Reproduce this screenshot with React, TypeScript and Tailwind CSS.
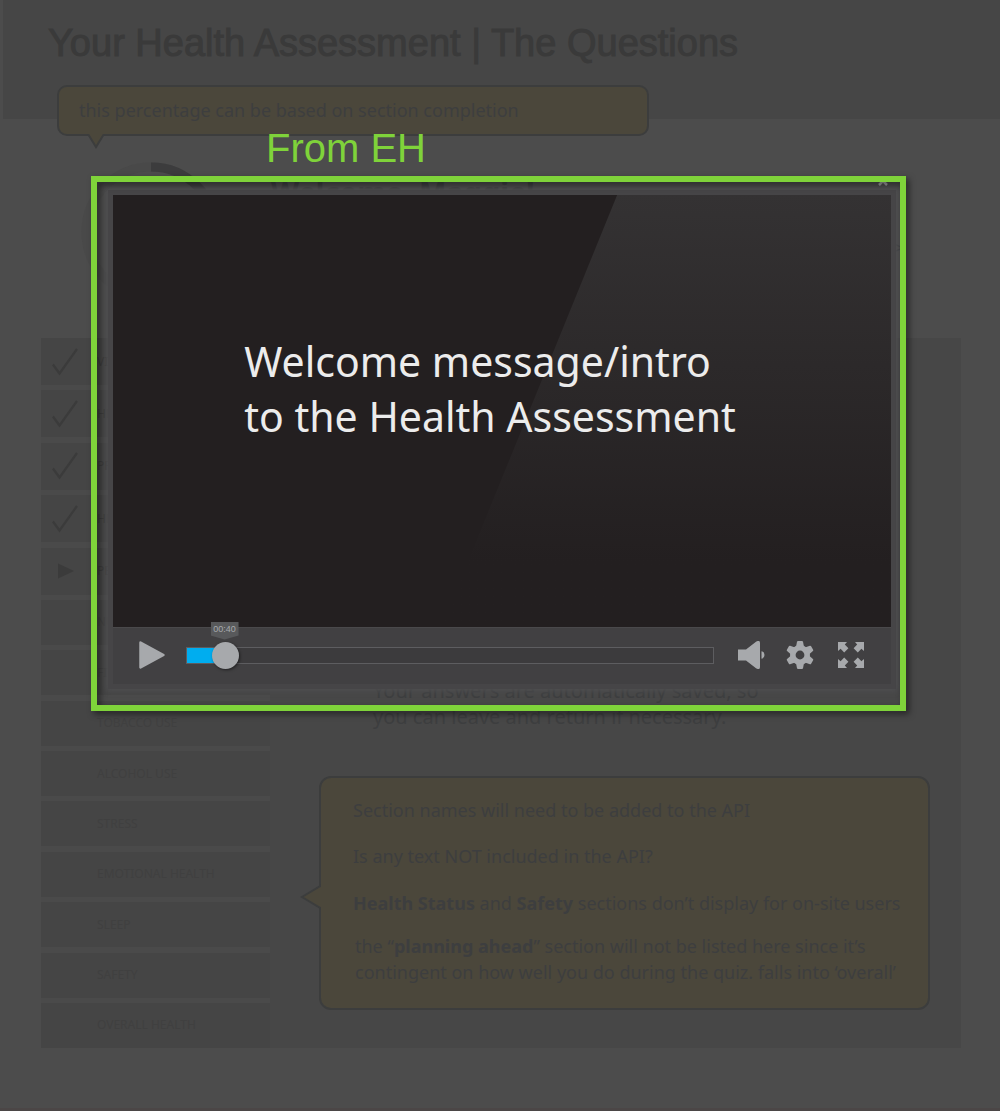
import { useState } from 'react';

type Section = { name: string; state: 'done' | 'current' | 'open' };

const sections: Section[] = [
  { name: 'VITALS', state: 'done' },
  { name: 'HEALTH HISTORY', state: 'done' },
  { name: 'PREVENTION', state: 'done' },
  { name: 'HEALTH STATUS', state: 'done' },
  { name: 'PERSONAL', state: 'current' },
  { name: 'NUTRITION', state: 'open' },
  { name: 'FITNESS', state: 'open' },
  { name: 'TOBACCO USE', state: 'open' },
  { name: 'ALCOHOL USE', state: 'open' },
  { name: 'STRESS', state: 'open' },
  { name: 'EMOTIONAL HEALTH', state: 'open' },
  { name: 'SLEEP', state: 'open' },
  { name: 'SAFETY', state: 'open' },
  { name: 'OVERALL HEALTH', state: 'open' },
];

function StateIcon({ state }: { state: Section['state'] }) {
  if (state === 'done') {
    return (
      <svg viewBox="0 0 28 30" className="h-[30px] w-7 fill-none stroke-[#3b3b3b]" aria-hidden="true">
        <path d="M2 17.500 8.500 26.500 26 2" strokeWidth="2.200" />
      </svg>
    );
  }
  if (state === 'current') {
    return (
      <svg viewBox="0 0 28 30" className="h-[30px] w-7 fill-[#3b3b3b]" aria-hidden="true">
        <path d="M7 7.500 23 15 7 22.500Z" />
      </svg>
    );
  }
  return <span className="w-7" />;
}

function ProgressRing() {
  return (
    <svg viewBox="0 0 140 140" className="size-[140px] shrink-0 fill-none" role="img" aria-label="Progress">
      <circle cx="70" cy="70" r="65" stroke="#494949" strokeWidth="9" />
      <path d="M70 5A65 65 0 0 1 135 70" stroke="#3c3c3d" strokeWidth="9" />
    </svg>
  );
}

function Player() {
  const duration = 786;
  const [time, setTime] = useState(40);
  const share = time / duration;
  const at = `calc(${share * 100}% + ${13 - share * 26}px)`;
  const clock = `${String(Math.floor(time / 60)).padStart(2, '0')}:${String(time % 60).padStart(2, '0')}`;

  return (
    <div className="border-[5px] border-[#464547] bg-[#414042] shadow-[0_0_5px_2px_#4e4e50]">
      <div className="relative flex aspect-[778/432] items-center justify-center bg-[#231f20]">
        <div className="absolute inset-0 bg-linear-to-b from-[#343233] to-[#231f20] to-85% [clip-path:polygon(64.8%_0,100%_0,100%_100%,42.200%_100%)]" />
        <p className="relative -mt-11 pr-6 text-[41px] leading-[55px] text-[#ececec]">
          Welcome message/intro
          <br />
          to the Health Assessment
        </p>
      </div>
      <div className="flex h-[57px] items-center border-t border-[#4a494b] pr-[27px] pb-0.5 pl-[25px] text-[#a7a9ac]">
        <button type="button" aria-label="Play" className="mr-5 shrink-0">
          <svg viewBox="0 0 28 30" className="h-[30px] w-7 fill-current stroke-current">
            <path d="M2.500 2.500 25.500 15 2.500 27.500Z" strokeWidth="2.500" strokeLinejoin="round" />
          </svg>
        </button>
        <div className="relative flex grow items-center">
          <input
            type="range"
            aria-label="Playback position"
            min={0}
            max={duration}
            value={time}
            onChange={(e) => setTime(Number(e.target.value))}
            style={{ backgroundImage: `linear-gradient(to right, #00adef ${at}, transparent ${at})` }}
            className="h-[17px] w-full appearance-none border border-[#5d5d60] bg-[#3c3b3d] [&::-webkit-slider-thumb]:size-[27px] [&::-webkit-slider-thumb]:appearance-none [&::-webkit-slider-thumb]:rounded-full [&::-webkit-slider-thumb]:bg-[#a7a9ac] [&::-webkit-slider-thumb]:shadow-[1px_1px_3px_rgba(0,0,0,0.5)]"
          />
          <output
            style={{ left: at }}
            className="absolute bottom-6 h-[18px] w-7 -translate-x-1/2 bg-[#58595b] text-center font-['Liberation_Sans',sans-serif] text-[9px] leading-[15px] [clip-path:polygon(0_0,100%_0,100%_78%,50%_100%,0_78%)]"
          >
            {clock}
          </output>
        </div>
        <button type="button" aria-label="Volume" className="ml-6 shrink-0">
          <svg viewBox="0 0 28 28" className="size-7 fill-current">
            <path d="M0 8.500H8L18 .8Q22 -1.500 22 2V26Q22 29.500 18 27.200L8 19.500H0Z" />
            <path d="M23.500 10.200A3.900 3.900 0 0 1 23.500 17.800Z" />
          </svg>
        </button>
        <button type="button" aria-label="Settings" className="ml-5 shrink-0">
          <svg viewBox="0 0 28 28" className="size-7">
            <circle cx="14" cy="14" r="7.200" fill="none" stroke="currentColor" strokeWidth="5.600" />
            <g fill="currentColor">
              {[0, 60, 120, 180, 240, 300].map((deg) => (
                <path key={deg} d="M10 6 11 .8Q11.200 0 12 0H16Q16.800 0 17 .8L18 6Z" transform={`rotate(${deg} 14 14)`} />
              ))}
            </g>
          </svg>
        </button>
        <button type="button" aria-label="Full screen" className="ml-6 shrink-0">
          <svg viewBox="0 0 26 26" className="size-[26px] fill-current">
            {[0, 90, 180, 270].map((deg) => (
              <path key={deg} d="M0 0H9L6.800 2.600 10.400 6.200 6.200 10.400 2.600 6.800 0 9Z" transform={`rotate(${deg} 13 13)`} />
            ))}
          </svg>
        </button>
      </div>
    </div>
  );
}

export default function App() {
  return (
    <div className="relative min-h-screen overflow-hidden border-b-[3px] border-[#4b4646] bg-[#4c4c4c] font-['Noto_Sans',sans-serif] text-[#3d3e3f]">
      <header className="ml-[3px] h-[119px] bg-[#464646] px-[45px] pt-[21px]">
        <h1 className="font-['Liberation_Sans',sans-serif] text-[38px] leading-[44px] text-[#3a3a3a] [-webkit-text-stroke:1px_#3a3a3a]">
          Your Health Assessment | The Questions
        </h1>
      </header>

      <aside className="absolute top-[85px] left-[57px] w-[592px] rounded-[10px] border-2 border-[#3c3d3d] bg-[#4b473b] px-5 pt-[9px] pb-2.5 text-[18px] leading-7">
        this percentage can be based on section completion
        <svg viewBox="0 0 18 16" className="absolute top-full left-7 h-4 w-[18px]" aria-hidden="true">
          <path d="M1 0 9 13 17 0" fill="#4b473b" stroke="#3c3d3d" strokeWidth="2" />
        </svg>
      </aside>

      <section className="flex h-[219px] items-start gap-[50px] pt-[43px] pr-[96px] pl-[81px]">
        <ProgressRing />
        <h2 className="grow pt-3 text-[29px] leading-9 font-bold">Welcome, Maggie!</h2>
        <span className="pt-[74px] text-xl leading-6" aria-hidden="true">&gt;</span>
      </section>

      <main className="mr-[39px] mb-[60px] ml-[41px] flex min-h-[710px] bg-[#474747]">
        <nav aria-label="Sections" className="flex w-[229px] shrink-0 bg-[#4a4a4a]">
          <ul className="flex grow flex-col justify-between">
            {sections.map((s) => (
              <li key={s.name}>
                {s.state === 'open' ? (
                  <a href="#section" className="flex h-[45px] items-center gap-[18px] bg-[#454545] pl-2.5 text-[12px] text-[#404040]">
                    <StateIcon state={s.state} />
                    {s.name}
                  </a>
                ) : (
                  <a href="#section" className="flex h-[47px] items-center gap-[18px] bg-[#454545] pl-2.5 text-[12px] text-[#3b3b3b]">
                    <StateIcon state={s.state} />
                    {s.name}
                  </a>
                )}
              </li>
            ))}
          </ul>
        </nav>

        <div className="flex grow flex-col justify-end pr-[31px] pb-[38px] pl-[49px]">
          <p className="mb-[46px] pl-[54px] text-[20px] leading-[26px]">
            Your answers are automatically saved, so
            <br />
            you can leave and return if necessary.
          </p>
          <aside className="relative h-[234px] rounded-[12px] border-2 border-[#3c3d3d] bg-[#4b473b] pt-[19px] pl-8 text-[18px] leading-[26px]">
            <p className="mb-5">Section names will need to be added to the API</p>
            <p className="mb-[21px]">Is any text NOT included in the API?</p>
            <p className="mb-[17px]">
              <b>Health Status</b> and <b>Safety</b> sections don’t display for on-site users
            </p>
            <p className="pl-0.5">
              the “<b>planning ahead</b>” section will not be listed here since it’s
              <br />
              contingent on how well you do during the quiz. falls into ‘overall’
            </p>
            <svg viewBox="0 0 21 26" className="absolute top-[106px] right-full h-[26px] w-[21px]" aria-hidden="true">
              <path d="M21 1.500 2 13 21 24.500" fill="#4b473b" stroke="#3c3d3d" strokeWidth="2" />
            </svg>
          </aside>
        </div>
      </main>

      <div role="dialog" aria-label="Welcome video" className="absolute top-[176px] right-[94px] left-[91px] pt-3.5 pr-2.5 pb-[22px] pl-[17px]">
        <button type="button" aria-label="Close" className="absolute top-0 right-[18px] size-2.5">
          <svg viewBox="0 0 10 10" className="size-2.5 stroke-[#9a9a9a]">
            <path d="M1 1 9 9M9 1 1 9" strokeWidth="2.500" />
          </svg>
        </button>
        <Player />
        <div className="pointer-events-none absolute inset-0 border-[6px] border-[#7fd33a] drop-shadow-[3px_3px_3px_rgba(0,0,0,0.5)]" />
        <p className="absolute -top-[50px] left-[175px] font-['Liberation_Sans',sans-serif] text-[40px] leading-[44px] text-[#7fd33a]">
          From EH
        </p>
      </div>
    </div>
  );
}
